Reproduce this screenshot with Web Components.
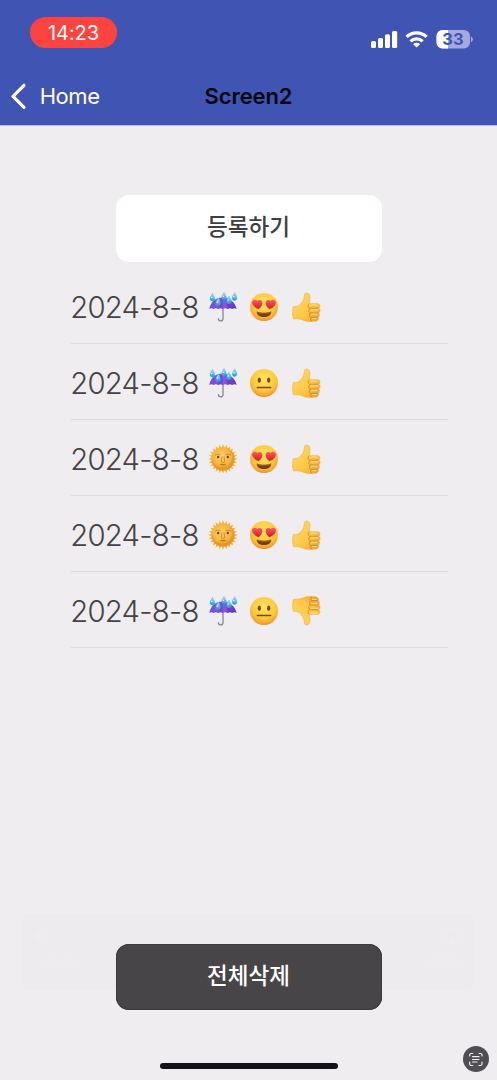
<!DOCTYPE html>
<html lang="ko">
<head>
<meta charset="utf-8">
<title>Screen2</title>
<style>
html,body{margin:0;padding:0;height:100%;background:#efedf0;overflow:hidden}
body{font-family:Inter,"Noto Sans CJK KR",sans-serif}
</style>
</head>
<body>
<app-screen></app-screen>
<script>
function define(name, html) {
  const t = document.createElement('template');
  t.innerHTML = html;
  customElements.define(name, class extends HTMLElement {
    constructor() {
      super();
      this.attachShadow({mode: 'open'}).appendChild(t.content.cloneNode(true));
    }
  });
}

define('status-bar', `
<style>
:host{display:flex;justify-content:space-between;height:66px;box-sizing:border-box;padding:17px 24px 0 30px}
.time{width:87px;height:31px;border-radius:16px;background:#ff4440;color:#fff;font-size:20px;line-height:32px;text-align:center;letter-spacing:-.1px}
svg{display:block;margin-top:12px}
</style>
<div class="time">14:23</div>
<svg width="103" height="22" viewBox="370 29 103 22">
  <g fill="#fff">
    <rect x="371" y="41" width="5" height="7" rx="1.6"/><rect x="378" y="38" width="5" height="10" rx="1.6"/>
    <rect x="385" y="34.2" width="5" height="13.8" rx="1.6"/><rect x="392" y="31" width="5.2" height="17" rx="1.6"/>
  </g>
  <g fill="none" stroke="#fff" stroke-width="3.3">
    <path d="M406.600 36.900a14.200 14.200 0 0 1 20 0"/><path d="M410.600 41.400a8.400 8.400 0 0 1 12 0"/>
  </g>
  <path d="M416.600 47.600l-3.500-3.400a4.900 4.900 0 0 1 7 0z" fill="#fff"/>
  <path d="M442.500 30h21.500a6 6 0 0 1 6 6v6.500a6 6 0 0 1-6 6h-21.500a6 6 0 0 1-6-6V36a6 6 0 0 1 6-6z" fill="#a4abdc"/>
  <path d="M448 30h-5.500a6 6 0 0 0-6 6v6.500a6 6 0 0 0 6 6h5.500z" fill="#fff"/>
  <path d="M471 36.500c2.400.9 2.400 4.800 0 5.700z" fill="#a4abdc"/>
  <text x="453" y="45.300" text-anchor="middle" font-family="Inter" font-size="16.500" font-weight="700" fill="#4055b3">33</text>
</svg>`);

define('nav-bar', `
<style>
:host{display:grid;grid-template-columns:1fr auto 1fr;align-items:center;height:59px;box-sizing:border-box;color:#fff;font-size:22px;line-height:28px}
.back{display:flex;align-items:center;padding-left:9px;letter-spacing:-.45px}
svg{margin-right:12.700px}
.title{color:#06070f;font-weight:600;letter-spacing:-.1px}
</style>
<div class="back"><svg width="18" height="28" viewBox="0 0 18 28"><path d="M15 3.300L4 14.300l11 11" fill="none" stroke="#fff" stroke-width="3.200" stroke-linecap="round" stroke-linejoin="round"/></svg><span>Home</span></div>
<div class="title">Screen2</div>`);

const art = {
umbrella: `<defs><linearGradient id="u" x2="1"><stop stop-color="#704ed8"/><stop offset=".55" stop-color="#8a58df"/><stop offset="1" stop-color="#6331bc"/></linearGradient><linearGradient id="d" x2="0" y2="1"><stop stop-color="#a6e4fa"/><stop offset="1" stop-color="#169bd9"/></linearGradient></defs>
<path d="M15 15v11.500c0 3.300-4.600 3.200-4.600.1" fill="none" stroke="#88868e" stroke-width="1.300" stroke-linecap="round"/>
<path d="M1.300 17C2.500 10 7.500 5.500 14.500 5.500S27 10 28.600 17q-2.200-1.500-4.300 0-2.400-1.500-4.800 0-2.300-1.500-4.700 0-2.400-1.500-4.700 0-2.300-1.500-4.600 0-2-1.500-4.200 0z" fill="url(#u)"/>
<path d="M14.500 6Q9.500 9 10.100 17q2.300-1.500 4.700 0zM16 6q6 3 8.300 11-2.400-1.500-4.800 0Q19 10 16 6z" fill="#5327ae" opacity=".35"/>
<g id="drops" fill="url(#d)" stroke="#45b9e8" stroke-width=".3"><path id="dr" d="M4.500 1.200Q1.400 5.700 2 7.600a2.500 2.500 0 0 0 4.800-.4Q6.800 5 4.500 1.200z"/><use href="#dr" x="11.600" y="-1"/><use href="#dr" x="22.200" y="-.6"/><use href="#dr" x="16.500" y="2.700"/><use href="#dr" x="5.800" y="4.500"/></g>
<g fill="#e4fbff"><circle cx="3.800" cy="5.500" r=".8"/><circle cx="15.400" cy="4.300" r=".8"/><circle cx="26" cy="4.700" r=".8"/><circle cx="20.200" cy="8" r=".7"/><circle cx="9.500" cy="10" r=".8"/></g>`,
base: `<defs><radialGradient id="f" cx=".5" cy=".35" r=".67"><stop stop-color="#ffe45f"/><stop offset=".6" stop-color="#ffca3e"/><stop offset=".88" stop-color="#f6a42d"/><stop offset="1" stop-color="#dc7f20"/></radialGradient><linearGradient id="h" x2="0" y2="1"><stop stop-color="#ff5a61"/><stop offset="1" stop-color="#d9152c"/></linearGradient></defs><circle cx="15" cy="15" r="14" fill="url(#f)"/>`,
thumb: `<defs><linearGradient id="t" x2="1" y2="1"><stop stop-color="#ffdc68"/><stop offset=".6" stop-color="#ffc748"/><stop offset="1" stop-color="#e99d2f"/></linearGradient></defs>
<g transform="translate(1.100 .7) scale(.95 .97)"><path d="M1 14.500q4.500.5 6.800-1.700c2.500-2.400 5-5.200 5-9.300 0-2.700 1.300-3.400 2.700-3.200 2.900.4 3.600 3.200 3.300 5.700-.3 2.300-.8 3.800-1 5.300h8.800c3.100 0 3.600 3.600 1.300 4.700 2.200.8 2 4.100-.1 4.900 1.700 1.100 1.200 4-.6 4.500 1.200 1.500.1 4-2.400 4.100-5.600.3-9.300.4-13.200-1.200-3-1.200-5.700-1.600-10.300-1.500q-1.500-6-.3-12.300z" fill="url(#t)" stroke="#e9a32f" stroke-width=".5"/>
<path d="M27.400 16H19c-2.500-.2-2.700-4.100-.8-4.600M27.600 20.900h-8.300c-2.300-.2-2.300-4.300 0-4.800M26.900 25.400h-7c-2.100-.3-2.300-4 0-4.400M21 29.200c-2-.3-2.100-3.300-.3-3.700" fill="none" stroke="#cf8522" stroke-width=".9"/>
<path d="M20 12.700h6.500M20.700 17.500h6.300M20.800 22.200h5.500M21.300 26.600h3.800" stroke="#ffe17d" stroke-width="1.100" stroke-linecap="round"/></g>`
};
art.love = art.base + `<path id="heart" d="M9.700 17.300C4.900 15 2.700 12.800 3.100 10.200c.4-2.700 3.700-3.400 5.200-1 1.800-2.200 5.100-1.100 5.100 1.700 0 2.300-1.600 4.200-3.700 6.400z" fill="url(#h)"/><path d="M20.300 17.300c4.800-2.300 7-4.500 6.600-7.100-.4-2.700-3.700-3.400-5.200-1-1.800-2.200-5.100-1.100-5.100 1.700 0 2.300 1.600 4.200 3.700 6.400z" fill="url(#h)"/><path d="M7.600 19.500q7.400 2.600 14.800 0c-.2 3.600-3.300 5.600-7.400 5.600s-7.200-2-7.400-5.600z" fill="#75400f"/><path d="M8 19.700q7 2.400 14 0l-.4 1.400q-6.600 1.700-13.200 0z" fill="#b97425" opacity=".6"/>`;
art.neutral = art.base + `<ellipse cx="10.300" cy="12.200" rx="1.600" ry="2.600" fill="#73491a"/><ellipse cx="19.700" cy="12.200" rx="1.600" ry="2.600" fill="#73491a"/><path d="M8.300 19.400h13.400" stroke="#73491a" stroke-width="1.500" stroke-linecap="round"/>`;
let rays = '';
for (let i = 0; i < 24; i++) rays += `<path d="M12.900 5.500L15 .3l2.100 5.200z" transform="rotate(${i * 15} 15 15)"/>`;
art.sun = `<defs><radialGradient id="s" cx=".45" cy=".4"><stop stop-color="#ffd269"/><stop offset=".8" stop-color="#f5b43d"/><stop offset="1" stop-color="#e4972a"/></radialGradient></defs><g fill="#f5b638">${rays}</g><circle cx="15" cy="15" r="11.500" fill="url(#s)"/><path d="M7 11.300q2.600-2.300 5.500-.5M17.500 10.800q3-1.800 5.500.5M14 12.500l-.8 5.200q1.800 1.600 3.600 0L16 12.500" fill="none" stroke="#c97a1d" stroke-width=".8"/><g fill="#ffe9b5"><ellipse cx="10.200" cy="13.100" rx="1.900" ry="1.100"/><ellipse cx="19.800" cy="13.100" rx="1.900" ry="1.100"/></g><circle cx="10.200" cy="13" r="1.300" fill="#654622"/><circle cx="19.800" cy="13" r="1.300" fill="#654622"/><path d="M11.500 20.300q1.800-1.100 3.500-.4 1.700-.7 3.500.4-3.500 2.500-7 0z" fill="#cb7225"/>`;
art.down = `<g transform="translate(0 30) scale(1 -1)">${art.thumb}</g>`;

customElements.define('emoji-icon', class extends HTMLElement {
  constructor() {
    super();
    this.attachShadow({mode: 'open'});
  }
  connectedCallback() {
    this.shadowRoot.innerHTML = `<style>:host{display:block;width:30px;height:30px}svg{display:block;overflow:visible}</style><svg width="30" height="30" viewBox="0 0 30 30">${art[this.getAttribute('kind')]}</svg>`;
  }
});

define('diary-row', `
<style>
:host{display:flex;align-items:center;height:75.900px;box-sizing:border-box;border-bottom:1px solid #dcdadd;color:#454347;font-size:29.300px;font-weight:350}
.date{width:137px;white-space:nowrap;letter-spacing:-.75px;margin:3px .3px 0 -.8px}
.icons{display:flex;gap:11.700px;margin-top:2.500px}
</style>
<div class="date"><slot></slot></div><div class="icons"><slot name="icon"></slot></div>`);

define('big-button', `
<style>
:host{display:block;width:266px;height:66.500px;box-sizing:border-box;border-radius:13px;background:var(--bg);color:var(--fg);font:500 22.500px/60px "Noto Sans CJK KR",sans-serif;text-align:center}
</style><slot></slot>`);

define('player-ghost', `
<style>
:host{display:block;width:450px;height:76px;box-sizing:border-box;border-radius:6px;background:#edebee;color:#efedf0;font-size:12px}
.row{display:flex;justify-content:space-between;padding:14px 13px 0 9px}
.times{display:flex;justify-content:space-between;padding:12px 15px 0 23px}
svg{display:block}
</style>
<div class="row"><svg width="23" height="16"><path d="M0 8l9-6v12z" fill="#efedf0"/></svg><svg width="16" height="16" fill="none" stroke="#efedf0"><path d="M3 11H1V1h14v10h-2"/><path d="M8 10l5 5H3z" fill="#efedf0"/></svg></div>
<div class="times"><span>00:22</span><span>00:33</span></div>`);

define('scan-badge', `
<style>:host{display:block;width:26px;height:26px;border-radius:50%;background:#504e52}svg{display:block}</style>
<svg width="26" height="26" fill="none" stroke="#f0eef1" stroke-width="1.200" stroke-linecap="round"><path d="M6.700 10V9q0-1.500 1.500-1.500h1.500M16 7.500h1.500q1.500 0 1.500 1.500v1M19 16v2q0 1.500-1.500 1.500H16M9.700 19.500H8.200q-1.500 0-1.500-1.500v-2M9.500 10.700h6.500M9.500 13.500h6.500M9.500 16h4.500"/></svg>`);

const entries = [
  ['umbrella', 'love', 'thumb'],
  ['umbrella', 'neutral', 'thumb'],
  ['sun', 'love', 'thumb'],
  ['sun', 'love', 'thumb'],
  ['umbrella', 'neutral', 'down']
].map(r => `<diary-row>2024-8-8${r.map(k => `<emoji-icon slot="icon" kind="${k}"></emoji-icon>`).join('')}</diary-row>`).join('');

define('app-screen', `
<style>
:host{display:flex;flex-direction:column;width:497px;height:1080px;box-sizing:border-box;position:relative;background:#efedf0;overflow:hidden}
header{height:125px;flex:none;background:#4055b3;box-shadow:0 1px 0 #b9bfdc}
main{flex:1;width:497px;display:flex;flex-direction:column;align-items:center;padding-top:70px}
.add{--bg:#fff;--fg:#403e42}
.list{width:377px;margin:7px 0 0 22px}
.clear{--bg:#474548;--fg:#fff;margin-top:auto;position:relative;box-shadow:inset 0 0 0 1px #3c3a3e}
.home{width:178px;height:6px;border-radius:3px;background:#151217;margin:53px 0 11px}
player-ghost{position:absolute;left:23px;top:914px}
scan-badge{position:absolute;left:463px;top:1046px}
</style>
<header><status-bar></status-bar><nav-bar></nav-bar></header>
<main>
<big-button class="add">등록하기</big-button>
<div class="list">${entries}</div>
<player-ghost></player-ghost>
<big-button class="clear">전체삭제</big-button>
<div class="home"></div>
</main>
<scan-badge></scan-badge>`);
</script>
</body>
</html>
